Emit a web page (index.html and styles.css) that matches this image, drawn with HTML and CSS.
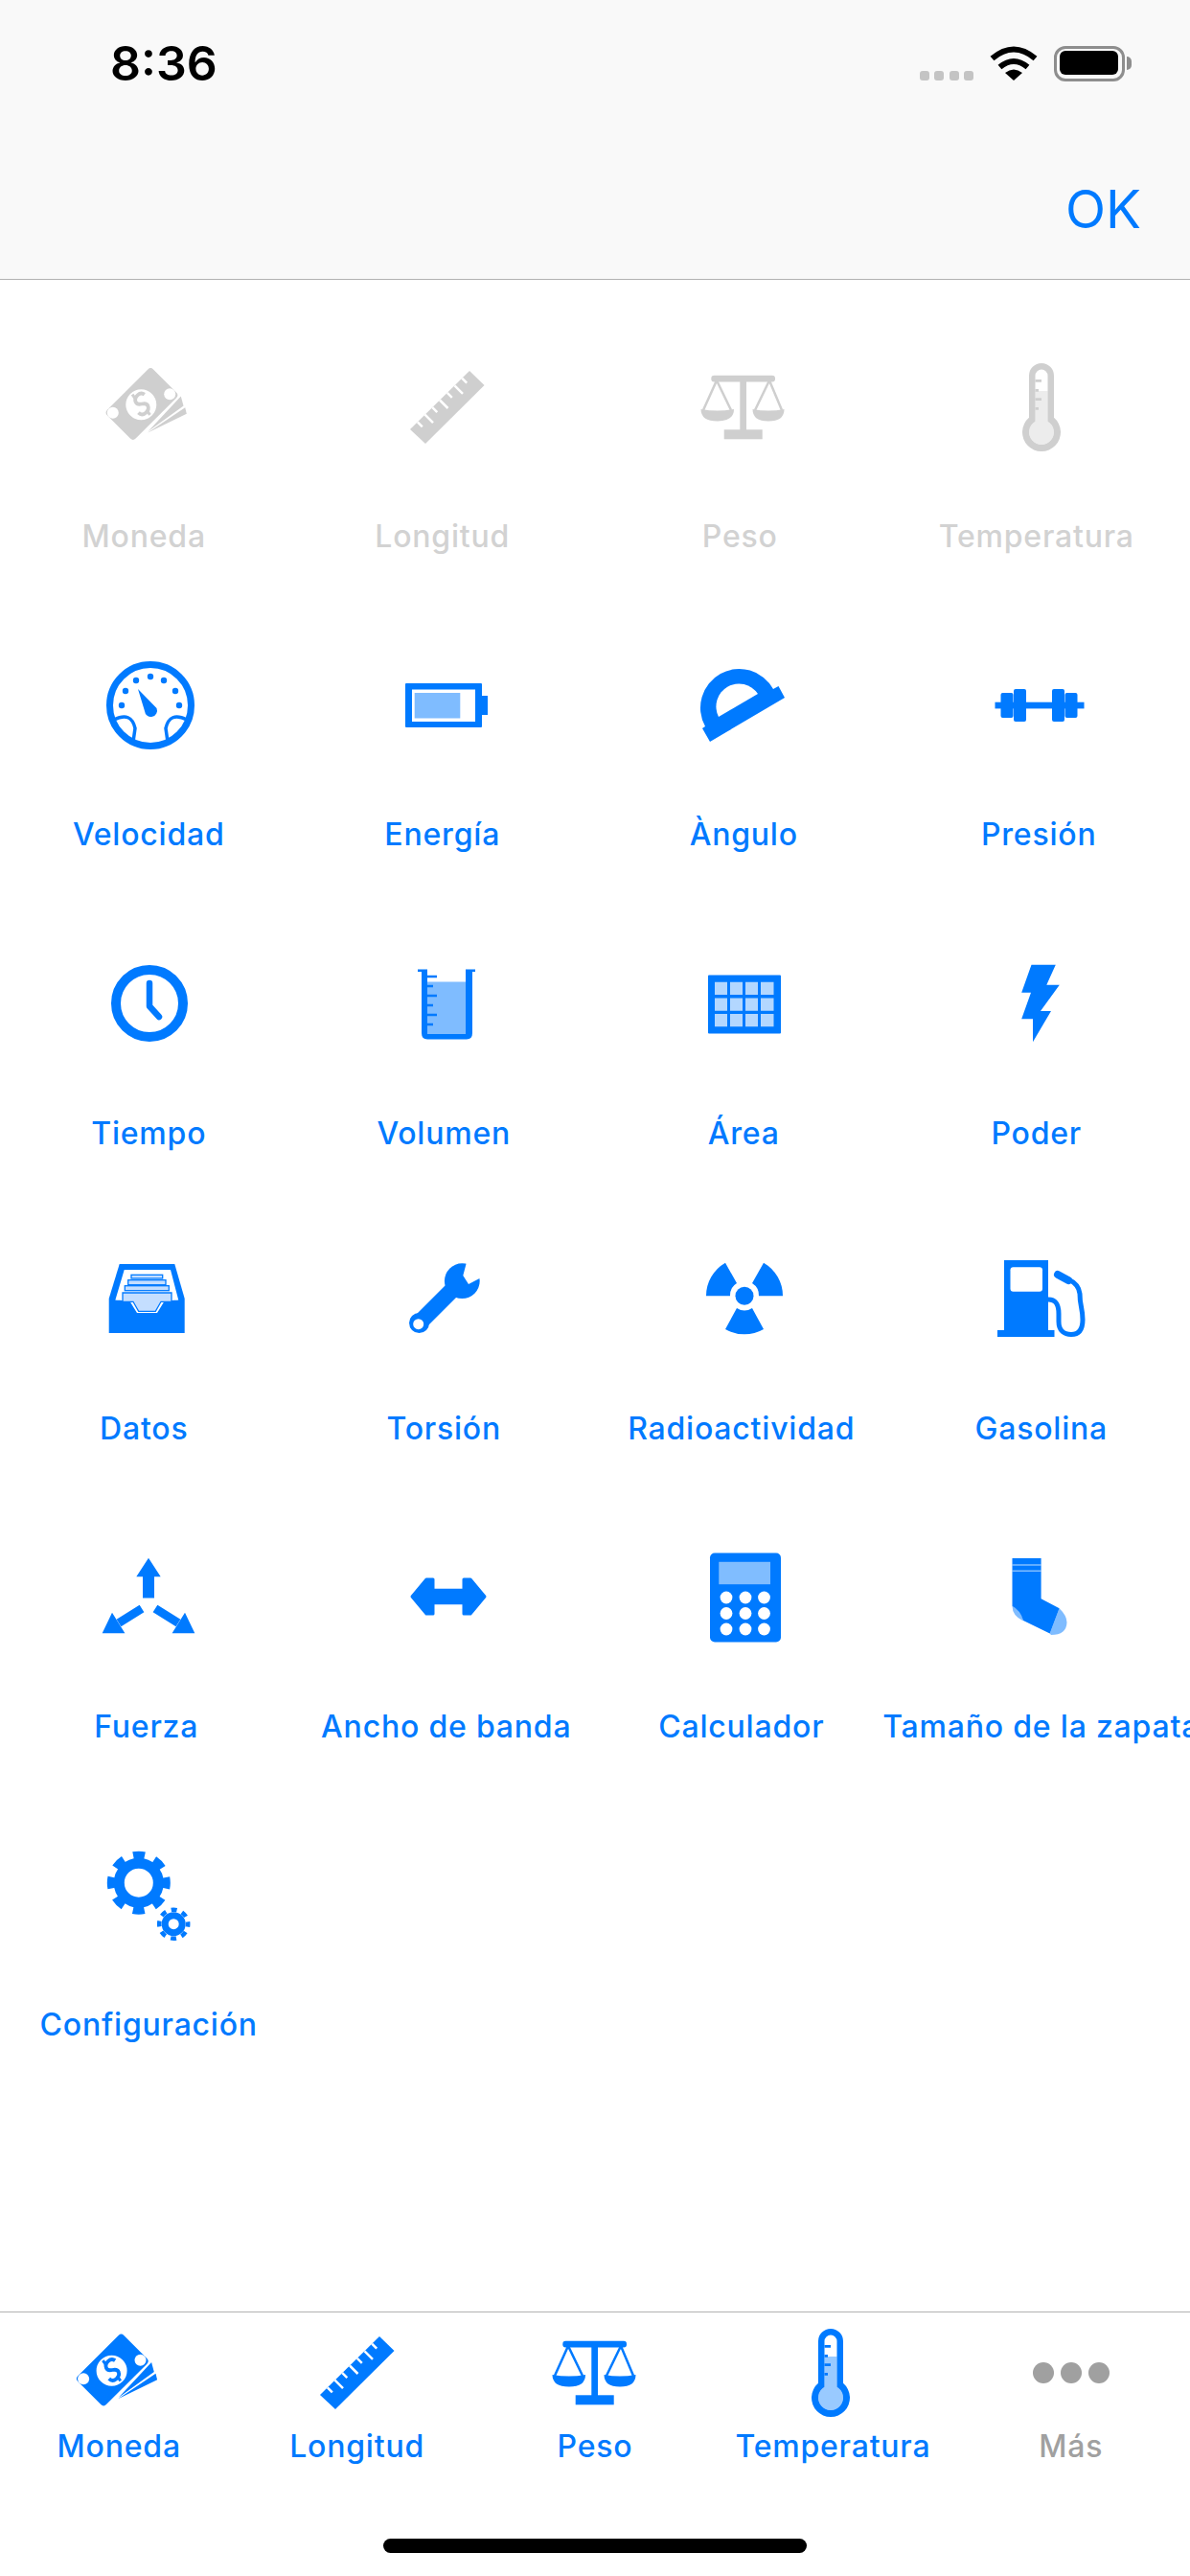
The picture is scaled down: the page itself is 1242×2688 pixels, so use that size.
FILE: index.html
```html
<!DOCTYPE html>
<html lang="es">
<head>
  <meta charset="UTF-8">
  <title>Unidades</title>
  <link rel="stylesheet" href="styles.css">
</head>
<body>
  <!-- icon shapes, drawn around 0,0 and placed with use -->
  <svg class="defs" aria-hidden="true">
    <defs>
      <g id="i-money">
        <g transform="translate(-4 0) rotate(-45)">
          <rect x="-34" y="-21" width="68" height="42" rx="4"/>
          <circle class="hole" cx="-1" cy="0" r="16"/>
          <path class="line" stroke-width="3.8" d="M9 -5 C8 -11 -1 -11 -3 -6 C-6 0 6 0 3 6 C1 11 -9 11 -9 4"/>
          <path class="line" stroke-width="3" d="M0 -14 L-1 -8 M-1 8 L-2 14"/>
        </g>
        <circle class="hole" cx="25.2" cy="-10.3" r="6"/>
        <circle class="hole" cx="-34.2" cy="9.3" r="6"/>
        <path d="M36.8 -8 L39.5 2 L2.5 28.7 Z M41.2 3.7 L42.8 10.3 L1.8 30.3 Z"/>
      </g>
      <g id="i-ruler">
        <path d="M23 -38 L38.5 -23 L-23 38 L-39 23 Z"/>
        <path class="cut" d="M-31.2 15.4 l5 5 M-23.5 7.7 l8.5 8.5 M-15.7 0.1 l5 5 M-8 -7.5 l8.5 8.5 M-0.2 -15.1 l5 5 M7.5 -22.7 l8.5 8.5 M15.2 -30.4 l5 5"/>
      </g>
      <g id="i-scale">
        <rect x="-32.7" y="-33.3" width="66.7" height="6.7" rx="3"/>
        <rect x="-2.7" y="-30" width="6.7" height="56"/>
        <rect x="-19.3" y="23.3" width="40" height="10"/>
        <path d="M-43.5 2 Q-26 5 -9 2 Q-9 14.5 -26 14.5 Q-43.5 14.5 -43.5 2 Z M10.5 2 Q27 5 43.5 2 Q43.5 14.5 27 14.5 Q10.5 14.5 10.5 2 Z"/>
        <path class="line" stroke-width="2.5" d="M-41 3 L-27 -28 L-12 3 M13 3 L28 -28 L41 3"/>
      </g>
      <g id="i-thermo">
        <path d="M-13 -33 a13 13 0 0 1 26 0 V10.8 a20 20 0 1 1 -26 0 Z"/>
        <path class="hole" d="M-6.5 -33 a6.5 6.5 0 0 1 13 0 V14.7 a13 13 0 1 1 -13 0 Z"/>
        <path class="tint" d="M-6.5 -17 H6.5 V14.7 a13 13 0 1 1 -13 0 Z"/>
        <path class="line" stroke-width="2.7" d="M-6.5 -27.7 H0 M-6.5 -17.7 H-3 M-6.5 -8.3 H0 M-6.5 1.3 H-3"/>
      </g>
      <g id="i-gauge">
        <circle class="line" r="42.5" stroke-width="7"/>
        <circle cx="0" cy="-30" r="3.2"/><circle cx="-15" cy="-26" r="3.2"/><circle cx="14" cy="-26" r="3.2"/>
        <circle cx="-26" cy="-15" r="3.2"/><circle cx="26" cy="-15" r="3.2"/><circle cx="-30" cy="0" r="3.2"/><circle cx="30" cy="0" r="3.2"/>
        <path d="M-13 -17 L6.5 3 A6.5 6.5 0 1 1 -6 6 Z"/>
        <path class="line" stroke-width="3.5" d="M-38 15 Q-20 6 -16 24 L-18 38 M38 15 Q20 6 16 24 L18 38"/>
      </g>
      <g id="i-battery">
        <rect x="-43" y="-23" width="80" height="46" rx="1"/>
        <rect x="37" y="-10" width="6" height="20"/>
        <rect class="hole" x="-36" y="-16.5" width="66" height="33.5"/>
        <rect class="tint-half" x="-33.3" y="-13" width="47.6" height="26.5"/>
      </g>
      <g id="i-protractor">
        <path d="M-34 38 L44 -8 L37.5 -20 L32 -17 A40.5 40.5 0 0 0 -39 22 L-42 24 Z"/>
        <path class="hole" d="M-25 12 L16 -12 A23.8 23.8 0 0 0 -25 12 Z"/>
      </g>
      <g id="i-dumbbell">
        <rect x="-46.5" y="-3.3" width="93" height="6.7"/>
        <rect x="-40.5" y="-13" width="13" height="26" rx="2"/>
        <rect x="-27" y="-17" width="13" height="34" rx="2"/>
        <rect x="13" y="-17" width="13" height="34" rx="2"/>
        <rect x="26.5" y="-13" width="13" height="26" rx="2"/>
      </g>
      <g id="i-clock">
        <circle class="line" r="35" stroke-width="10"/>
        <path class="line" stroke-width="6.5" stroke-linecap="round" stroke-linejoin="round" d="M0 -21 V3 L10 14"/>
      </g>
      <g id="i-beaker">
        <path class="tint-half" d="M-20 -23.5 H20 V31 H-20 Z"/>
        <path d="M-30 -36.5 H-20 V31 H20 V-36.5 H30 V-34 H27 V30 Q27 36.5 21 36.5 H-20 Q-26 36.5 -26 30 V-34 H-30 Z"/>
        <path class="line" stroke-width="2.5" d="M-20 -29 H-10 M-20 -19 H-14 M-20 -9 H-10 M-20 1 H-14 M-20 11 H-10 M-20 21 H-14"/>
      </g>
      <g id="i-grid">
        <rect x="-38" y="-30.5" width="76" height="61" rx="1"/>
        <path class="lite" d="M-31 -23.3 h13 v13.3 h-13 Z M-15 -23.3 h13 v13.3 h-13 Z M1 -23.3 h13 v13.3 h-13 Z M17 -23.3 h13.5 v13.3 h-13.5 Z M-31 -6.6 h13 v13.3 h-13 Z M-15 -6.6 h13 v13.3 h-13 Z M1 -6.6 h13 v13.3 h-13 Z M17 -6.6 h13.5 v13.3 h-13.5 Z M-31 10 h13 v13.3 h-13 Z M-15 10 h13 v13.3 h-13 Z M1 10 h13 v13.3 h-13 Z M17 10 h13.5 v13.3 h-13.5 Z"/>
      </g>
      <path id="i-bolt" d="M-9.5 -40.3 H15.8 L6.3 -19.3 H19.8 L0 8 H11 L-8 40.3 V16.3 H-19.8 L-10 -11.3 H-19.8 Z"/>
      <g id="i-inbox">
        <path d="M-28.3 -36 H29.3 L39.7 0 V36 H-39.3 V0 Z"/>
        <path class="hole" d="M-23.3 -30 H25 L33.3 1.7 H-32.7 Z M-32.7 1 H33.3 L18.3 3.3 L11 15 H-10 L-17.3 3.3 Z"/>
        <rect class="card" x="-16" y="-24.7" width="32.7" height="3.7"/>
        <rect class="card" x="-19.3" y="-19.3" width="39.3" height="5"/>
        <rect class="card" x="-22.7" y="-13.3" width="46" height="5"/>
        <path class="card" d="M-25 -6 H26 V3.3 H15 L9.3 13.3 H-8.3 L-14 3.3 H-25 Z"/>
      </g>
      <g id="i-wrench">
        <path class="line" stroke-width="17" d="M-26.5 25.5 L8 -9"/>
        <circle cx="-26.5" cy="25.5" r="10.5"/>
        <circle class="hole" cx="-27.3" cy="26.7" r="5.5"/>
        <circle cx="18.3" cy="-18.3" r="18.4"/>
        <path class="hole" d="M23 -38 L19.3 -24 L25 -15 L38 -21.7 L40 -38 Z"/>
      </g>
      <g id="i-radio">
        <circle cx="0" cy="-2.7" r="9.5"/>
        <path d="M-40 -2.7 A40 40 0 0 1 -20 -37.3 L-8 -16 A15 15 0 0 0 -15 -2.7 Z"/>
        <path d="M40 -2.7 A40 40 0 0 0 20 -37.3 L8 -16 A15 15 0 0 1 15 -2.7 Z"/>
        <path d="M-20 32 A40 40 0 0 0 20 32 L8 10 A15 15 0 0 1 -8 10 Z"/>
      </g>
      <g id="i-gas">
        <rect x="-39" y="-40" width="46" height="75"/>
        <rect x="-46" y="33" width="59.5" height="7"/>
        <rect class="hole" x="-32.5" y="-32.7" width="33.5" height="25.4" rx="3"/>
        <path class="line" stroke-width="5" d="M7 1 C15 1 18 6 18 16 L18 24 C18 34 24 37.5 31 37.5 C40 37.5 43 31 43 22 C43 10 40 8 40 -5 Q39 -15 28 -20"/>
        <path class="line" stroke-width="8" stroke-linecap="round" d="M17 -25 L28 -19"/>
      </g>
      <g id="i-force">
        <path d="M0 -39.7 L12.7 -20.3 H6 V2 H-6 V-20.3 H-12.7 Z"/>
        <path class="line" stroke-width="9" d="M-7 13 L-31 28 M7 13 L31 28"/>
        <path d="M-48.3 38.7 L-38 17.3 L-24.6 38.7 Z M48.3 38.7 L38 17.3 L24.6 38.7 Z"/>
      </g>
      <path id="i-arrows" class="round" d="M-38 0 L-23 -18 H-16 V-6.7 H16 V-18 H23 L38 0 L23 18 H16 V6.7 H-16 V18 H-23 Z"/>
      <g id="i-calc">
        <rect x="-37" y="-46.5" width="74" height="93" rx="5"/>
        <rect class="lite-half" x="-27.7" y="-37.2" width="53.7" height="23.4"/>
        <circle class="hole" cx="-20" cy="0" r="6.4"/><circle class="hole" cx="0" cy="0" r="6.4"/><circle class="hole" cx="19.5" cy="0" r="6.4"/>
        <circle class="hole" cx="-20" cy="16.5" r="6.4"/><circle class="hole" cx="0" cy="16.5" r="6.4"/><circle class="hole" cx="19.5" cy="16.5" r="6.4"/>
        <circle class="hole" cx="-20" cy="33" r="6.4"/><circle class="hole" cx="0" cy="33" r="6.4"/><circle class="hole" cx="19.5" cy="33" r="6.4"/>
      </g>
      <g id="i-sock">
        <path d="M-28.5 -40 H1.6 V2.3 L20.6 12.3 L10.7 38.5 L-17 25 Q-20 14 -28.5 10 Z"/>
        <path class="tint-half" d="M-28.5 10 Q-18 14 -17 25.5 Q-28.5 20 -28.5 10 Z M20.6 12.3 Q28.5 20 28.5 27 Q28 40 12 40 L10.7 38.5 Z"/>
        <path class="lite-line" d="M-28.5 -33 H1.6 M-28.5 -26.7 H1.6"/>
      </g>
      <g id="i-gears">
        <g transform="translate(-10.2 -13.3)">
          <circle class="line" r="20.5" stroke-width="11"/>
          <circle class="line" r="29" stroke-width="8" stroke-dasharray="12 10.78" stroke-dashoffset="6"/>
        </g>
        <g transform="translate(26.2 29.7)">
          <circle class="line" r="9" stroke-width="7"/>
          <circle class="line" r="15" stroke-width="4.5" stroke-dasharray="6 5.78" stroke-dashoffset="3"/>
        </g>
      </g>
    </defs>
  </svg>

  <header class="nav">
    <div class="status">
      <span class="time">8:36</span>
      <div class="status-icons">
        <div class="signal"><i></i><i></i><i></i><i></i></div>
        <svg class="wifi" viewBox="0 0 50 36">
          <path class="line" stroke-width="6" d="M2.5 13 Q25 -6 47.5 13"/>
          <path class="line" stroke-width="6" d="M10.5 22 Q25 10 39.5 22"/>
          <path d="M16 28 Q25 21 34 28 L25 36 Z"/>
        </svg>
        <div class="battery"><div class="battery-fill"></div></div>
        <div class="battery-tip"></div>
      </div>
    </div>
    <div class="nav-action"><span class="ok">OK</span></div>
  </header>

  <main class="grid">
    <div class="cell off"><svg class="icon" viewBox="-60 -50 120 100"><use href="#i-money" x="-3" y="-3.5"/></svg><span class="label shift-5">Moneda</span></div>
    <div class="cell off"><svg class="icon" viewBox="-60 -50 120 100"><use href="#i-ruler" x="1"/></svg><span class="label shift-4">Longitud</span></div>
    <div class="cell off"><svg class="icon" viewBox="-60 -50 120 100"><use href="#i-scale" x="-1"/></svg><span class="label shift-4">Peso</span></div>
    <div class="cell off"><svg class="icon" viewBox="-60 -50 120 100"><use href="#i-thermo"/></svg><span class="label shift-5">Temperatura</span></div>

    <div class="cell"><svg class="icon" viewBox="-60 -50 120 100"><use href="#i-gauge" x="2"/></svg><span class="label">Velocidad</span></div>
    <div class="cell"><svg class="icon" viewBox="-60 -50 120 100"><use href="#i-battery"/></svg><span class="label shift-4">Energía</span></div>
    <div class="cell"><svg class="icon" viewBox="-60 -50 120 100"><use href="#i-protractor" x="-1"/></svg><span class="label">Àngulo</span></div>
    <div class="cell"><svg class="icon" viewBox="-60 -50 120 100"><use href="#i-dumbbell" x="-2"/></svg><span class="label shift-2">Presión</span></div>

    <div class="cell"><svg class="icon" viewBox="-60 -50 120 100"><use href="#i-clock" x="1" y="-1"/></svg><span class="label">Tiempo</span></div>
    <div class="cell"><svg class="icon" viewBox="-60 -50 120 100"><use href="#i-beaker"/></svg><span class="label shift-2">Volumen</span></div>
    <div class="cell"><svg class="icon" viewBox="-60 -50 120 100"><use href="#i-grid" x="1"/></svg><span class="label">Área</span></div>
    <div class="cell"><svg class="icon" viewBox="-60 -50 120 100"><use href="#i-bolt" x="-1" y="-1"/></svg><span class="label shift-5">Poder</span></div>

    <div class="cell"><svg class="icon" viewBox="-60 -50 120 100"><use href="#i-inbox" x="-2" y="-1"/></svg><span class="label shift-5">Datos</span></div>
    <div class="cell"><svg class="icon" viewBox="-60 -50 120 100"><use href="#i-wrench" x="-2" y="-1"/></svg><span class="label shift-2">Torsión</span></div>
    <div class="cell"><svg class="icon" viewBox="-60 -50 120 100"><use href="#i-radio" x="1" y="-1"/></svg><span class="label shift-2">Radioactividad</span></div>
    <div class="cell"><svg class="icon" viewBox="-60 -50 120 100"><use href="#i-gas" y="-1"/></svg><span class="label">Gasolina</span></div>

    <div class="cell"><svg class="icon" viewBox="-60 -50 120 100"><use href="#i-force" y="-1.5"/></svg><span class="label shift-2">Fuerza</span></div>
    <div class="cell"><svg class="icon" viewBox="-60 -50 120 100"><use href="#i-arrows" x="2" y="-1"/></svg><span class="label">Ancho de banda</span></div>
    <div class="cell"><svg class="icon" viewBox="-60 -50 120 100"><use href="#i-calc" x="2"/></svg><span class="label shift-2">Calculador</span></div>
    <div class="cell"><svg class="icon" viewBox="-60 -50 120 100"><use href="#i-sock" x="-2" y="-1"/></svg><span class="label">Tamaño de la zapata</span></div>

    <div class="cell"><svg class="icon" viewBox="-60 -50 120 100"><use href="#i-gears"/></svg><span class="label">Configuración</span></div>
  </main>

  <nav class="tabbar">
    <div class="tab"><svg class="icon" viewBox="-60 -50 120 100"><use href="#i-money" x="-2.7"/></svg><span class="label">Moneda</span></div>
    <div class="tab"><svg class="icon" viewBox="-60 -50 120 100"><use href="#i-ruler" y="3"/></svg><span class="label">Longitud</span></div>
    <div class="tab"><svg class="icon" viewBox="-60 -50 120 100"><use href="#i-scale" x="-1" y="3"/></svg><span class="label">Peso</span></div>
    <div class="tab"><svg class="icon" viewBox="-60 -50 120 100"><use href="#i-thermo" x="-2" y="3"/></svg><span class="label">Temperatura</span></div>
    <div class="tab more">
      <svg class="icon" viewBox="-60 -50 120 100"><circle cx="-29" cy="3" r="11"/><circle cy="3" r="11"/><circle cx="29" cy="3" r="11"/></svg>
      <span class="label">Más</span>
    </div>
    <div class="home-bar"></div>
  </nav>
</body>
</html>
```

FILE: styles.css
```css
body {
  margin: 0;
  width: 1242px;
  height: 2688px;
  display: flex;
  flex-direction: column;
  overflow: hidden;
  background: white;
  font-family: Inter, "Liberation Sans", sans-serif;
}
.defs {
  display: none;
}

/* top bar */
.nav {
  height: 291px;
  flex-shrink: 0;
  background: #f9f9f9;
  border-bottom: 1px solid #b2b2b2;
}
.status {
  display: flex;
  justify-content: space-between;
  padding: 36px 61px 0 115px;
  height: 70px;
}
.time {
  font-size: 50px;
  font-weight: 600;
  line-height: 60px;
  color: black;
}
.status-icons {
  display: flex;
  align-items: flex-start;
  padding-top: 12px;
}
.signal {
  display: flex;
  gap: 5.4px;
  margin: 26px 17px 0 0;
}
.signal i {
  width: 10px;
  height: 10px;
  border-radius: 3px;
  background: #c4c4c4;
}
.wifi {
  width: 50px;
  height: 36px;
  margin-right: 17px;
  fill: black;
  color: black;
}
.battery {
  width: 74px;
  height: 37px;
  box-sizing: border-box;
  border: 3px solid #8e8e8e;
  border-radius: 12px;
  padding: 2px 4px 4px 3px;
}
.battery-fill {
  height: 100%;
  background: black;
  border-radius: 6px;
}
.battery-tip {
  width: 5px;
  height: 14px;
  margin: 11px 0 0 2px;
  background: #8e8e8e;
  border-radius: 0 7px 7px 0;
}
.nav-action {
  display: flex;
  justify-content: flex-end;
  padding: 0 51px 0 0;
  margin-top: 79px;
}
.ok {
  font-size: 55px;
  line-height: 66px;
  color: #007aff;
}

/* grid of units */
.grid {
  flex: 1;
  display: grid;
  grid-template-columns: repeat(4, 1fr);
  grid-template-rows: 311px 312px 308px 311px 311px auto;
  padding-top: 83px;
}
.cell {
  display: flex;
  flex-direction: column;
  align-items: center;
  min-width: 0;
  color: #007aff;
}
.cell .label {
  margin-top: 65px;
}
.cell.off {
  color: #cfcfcf;
}
.cell.off .label {
  color: #d2d2d2;
}
.label {
  font-size: 32px;
  font-weight: 500;
  line-height: 40px;
  letter-spacing: 0.8px;
  white-space: nowrap;
}
/* some labels sit a little left of the cell centre */
.shift-2 {
  margin-right: 5px;
}
.shift-4 {
  margin-right: 8px;
}
.shift-5 {
  margin-right: 10px;
}

/* icons */
.icon {
  width: 120px;
  height: 100px;
  flex-shrink: 0;
  fill: currentColor;
}
.hole {
  fill: white;
}
.line {
  fill: none;
  stroke: currentColor;
}
.cut {
  fill: none;
  stroke: white;
  stroke-width: 2.5;
}
.tint {
  fill: currentColor;
  fill-opacity: 0.4;
}
.tint-half {
  fill: currentColor;
  fill-opacity: 0.5;
}
.lite {
  fill: white;
  fill-opacity: 0.7;
}
.lite-half {
  fill: white;
  fill-opacity: 0.5;
}
.lite-line {
  fill: none;
  stroke: white;
  stroke-opacity: 0.5;
  stroke-width: 1.6;
}
.card {
  fill: #c4deff;
  stroke: currentColor;
  stroke-width: 1.3;
}
.round {
  stroke: currentColor;
  stroke-width: 3;
  stroke-linejoin: round;
}

/* tab bar */
.tabbar {
  position: relative;
  height: 265px;
  flex-shrink: 0;
  display: flex;
  padding-top: 10px;
  background: white;
  border-top: 1px solid #b2b2b2;
}
.tab {
  flex: 1;
  display: flex;
  flex-direction: column;
  align-items: center;
  color: #007aff;
}
.tab .label {
  margin-top: 10px;
}
.tab.more {
  color: #a0a0a0;
}
.home-bar {
  position: absolute;
  left: 400px;
  bottom: 24px;
  width: 442px;
  height: 15px;
  border-radius: 8px;
  background: black;
}
```
